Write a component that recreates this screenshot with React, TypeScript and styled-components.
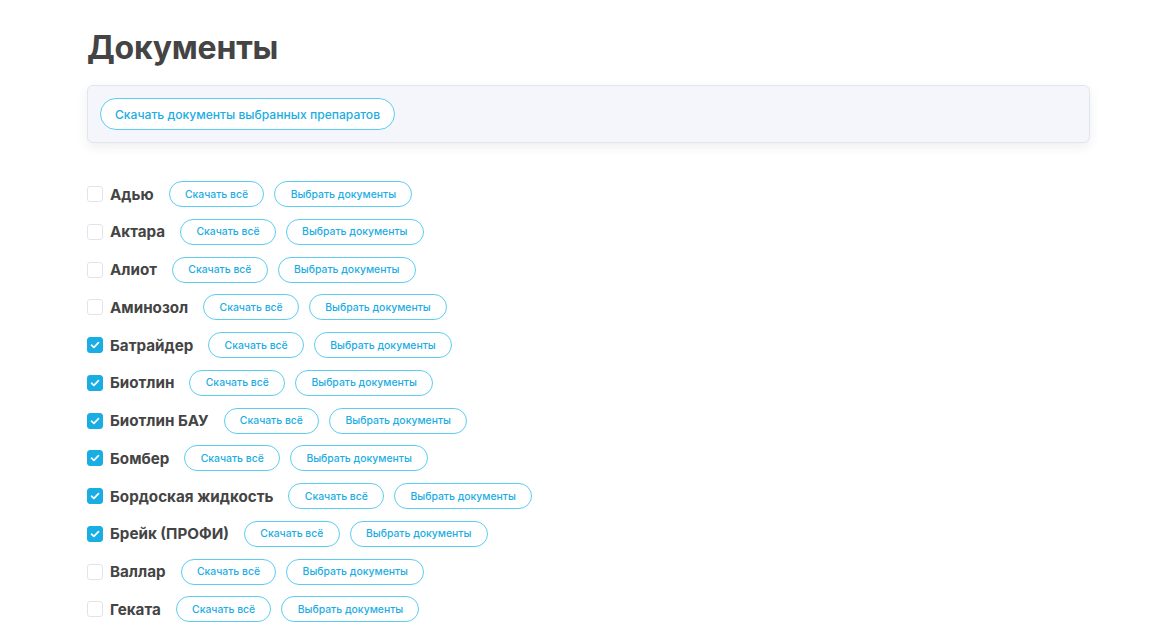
import React, { useState } from "react";
import styled, { createGlobalStyle } from "styled-components";

const GlobalStyle = createGlobalStyle`
  html, body { margin: 0; padding: 0; background: #ffffff; }
  body { font-family: Inter, "Noto Sans", Arial, sans-serif; color: #444444; }
  * { box-sizing: border-box; }
`;

const Page = styled.main`
  padding: 26px 86px 0 87px;
`;

const Title = styled.h1`
  margin: 0;
  font-size: 32px;
  line-height: 44px;
  font-weight: 700;
  color: #444444;
  letter-spacing: -0.2px;
`;

const Toolbar = styled.div`
  margin-top: 15px;
  display: flex;
  align-items: center;
  height: 58px;
  padding: 0 12px;
  background: #f5f6fb;
  border: 1px solid #e3e5ee;
  border-radius: 6px;
  box-shadow: 0 4px 12px rgba(40, 50, 80, 0.08);
`;

const PillButton = styled.button<{ $size?: "lg" | "sm" }>`
  display: inline-flex;
  align-items: center;
  justify-content: center;
  height: ${(p) => (p.$size === "lg" ? "32px" : "26px")};
  padding: 0 ${(p) => (p.$size === "lg" ? "14px" : "15.3px")};
  border: 1px solid #5ccdf0;
  border-radius: 999px;
  background: #ffffff;
  color: #1cade2;
  font-family: Inter, "Noto Sans", Arial, sans-serif;
  font-size: ${(p) => (p.$size === "lg" ? "12.1px" : "10.4px")};
  font-weight: 500;
  white-space: nowrap;
  cursor: pointer;
`;

const List = styled.ul`
  list-style: none;
  margin: 38px 0 0;
  padding: 0;
  display: flex;
  flex-direction: column;
  gap: 11.75px;
`;

const Row = styled.li`
  display: flex;
  align-items: center;
  height: 26px;
`;

const Box = styled.span<{ $checked: boolean }>`
  flex: none;
  width: 16px;
  height: 16px;
  border-radius: 3px;
  border: 1px solid ${(p) => (p.$checked ? "#18ade3" : "#e2e4ea")};
  background: ${(p) => (p.$checked ? "#18ade3" : "#ffffff")};
  display: inline-flex;
  align-items: center;
  justify-content: center;
  cursor: pointer;
`;

const Label = styled.span`
  margin-left: 7px;
  margin-right: 15px;
  font-size: 15.2px;
  font-weight: 700;
  color: #444444;
  white-space: nowrap;
`;

const Actions = styled.div`
  display: flex;
  gap: 10px;
`;

const items: { name: string; checked: boolean }[] = [
  { name: "Адью", checked: false },
  { name: "Актара", checked: false },
  { name: "Алиот", checked: false },
  { name: "Аминозол", checked: false },
  { name: "Батрайдер", checked: true },
  { name: "Биотлин", checked: true },
  { name: "Биотлин БАУ", checked: true },
  { name: "Бомбер", checked: true },
  { name: "Бордоская жидкость", checked: true },
  { name: "Брейк (ПРОФИ)", checked: true },
  { name: "Валлар", checked: false },
  { name: "Геката", checked: false },
];

const Check = () => (
  <svg width="10" height="8" viewBox="0 0 10 8" fill="none">
    <path d="M1.5 4.2 L3.9 6.4 L8.5 1.6" stroke="#ffffff" strokeWidth="1.7" strokeLinecap="round" strokeLinejoin="round" />
  </svg>
);

export default function App() {
  const [state, setState] = useState(items);
  const toggle = (i: number) =>
    setState((s) => s.map((it, j) => (j === i ? { ...it, checked: !it.checked } : it)));

  return (
    <>
      <GlobalStyle />
      <Page>
        <Title>Документы</Title>
        <Toolbar>
          <PillButton $size="lg">Скачать документы выбранных препаратов</PillButton>
        </Toolbar>
        <List>
          {state.map((it, i) => (
            <Row key={it.name}>
              <Box $checked={it.checked} onClick={() => toggle(i)}>
                {it.checked && <Check />}
              </Box>
              <Label>{it.name}</Label>
              <Actions>
                <PillButton>Скачать всё</PillButton>
                <PillButton>Выбрать документы</PillButton>
              </Actions>
            </Row>
          ))}
        </List>
      </Page>
    </>
  );
}
